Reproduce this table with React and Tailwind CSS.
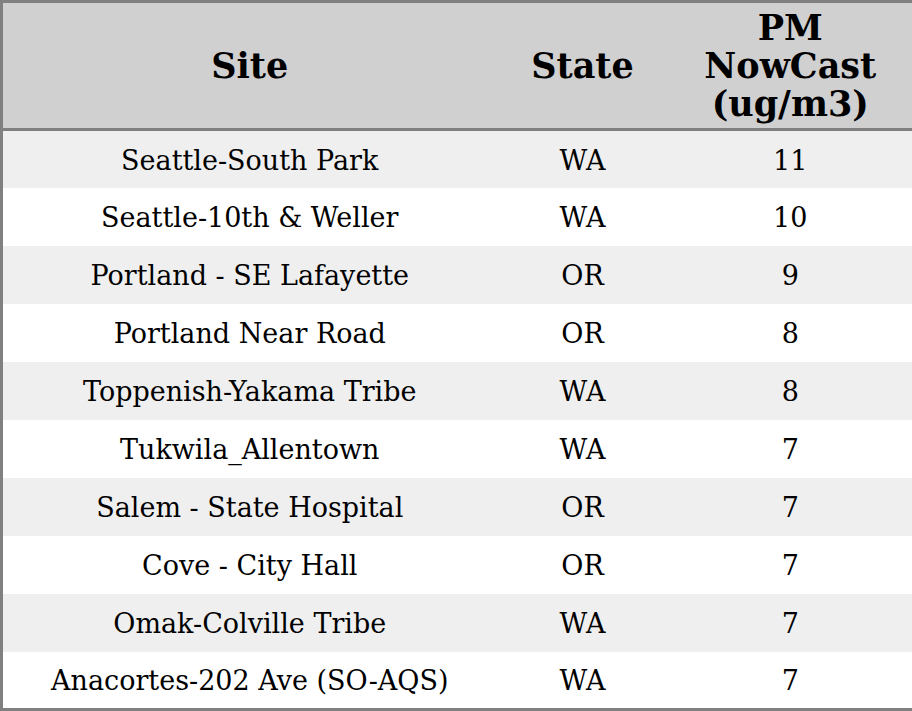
import React from 'react';

const rows = [
  ['Seattle-South Park', 'WA', 11],
  ['Seattle-10th & Weller', 'WA', 10],
  ['Portland - SE Lafayette', 'OR', 9],
  ['Portland Near Road', 'OR', 8],
  ['Toppenish-Yakama Tribe', 'WA', 8],
  ['Tukwila_Allentown', 'WA', 7],
  ['Salem - State Hospital', 'OR', 7],
  ['Cove - City Hall', 'OR', 7],
  ['Omak-Colville Tribe', 'WA', 7],
  ['Anacortes-202 Ave (SO-AQS)', 'WA', 7],
];

export default function App() {
  return (
    <div className="w-[912px] h-[711px] bg-white" style={{ fontFamily: '"DejaVu Serif", serif' }}>
      <table className="w-[912px] border-collapse border-[3px] border-[#808080] table-fixed text-black">
        <colgroup>
          <col className="w-[495px]" />
          <col className="w-[172px]" />
          <col className="w-[245px]" />
        </colgroup>
        <thead>
          <tr className="bg-[#d0d0d0] h-[128px] border-b-[3px] border-[#808080]">
            <th className="text-[35px] leading-[38px] font-bold text-center p-0">Site</th>
            <th className="text-[35px] leading-[38px] font-bold text-center p-0">State</th>
            <th className="text-[35px] leading-[38px] font-bold text-center p-0">
              PM<br />NowCast<br />(ug/m3)
            </th>
          </tr>
        </thead>
        <tbody>
          {rows.map(([site, state, pm], i) => (
            <tr key={site} className={`h-[58px] ${i % 2 === 0 ? 'bg-[#efefef]' : 'bg-white'}`}>
              <td className="text-[27px] leading-[30px] text-center pt-[3px] px-0 pb-0">{site}</td>
              <td className="text-[27px] leading-[30px] text-center pt-[3px] px-0 pb-0">{state}</td>
              <td className="text-[27px] leading-[30px] text-center pt-[3px] px-0 pb-0">{pm}</td>
            </tr>
          ))}
        </tbody>
      </table>
    </div>
  );
}
